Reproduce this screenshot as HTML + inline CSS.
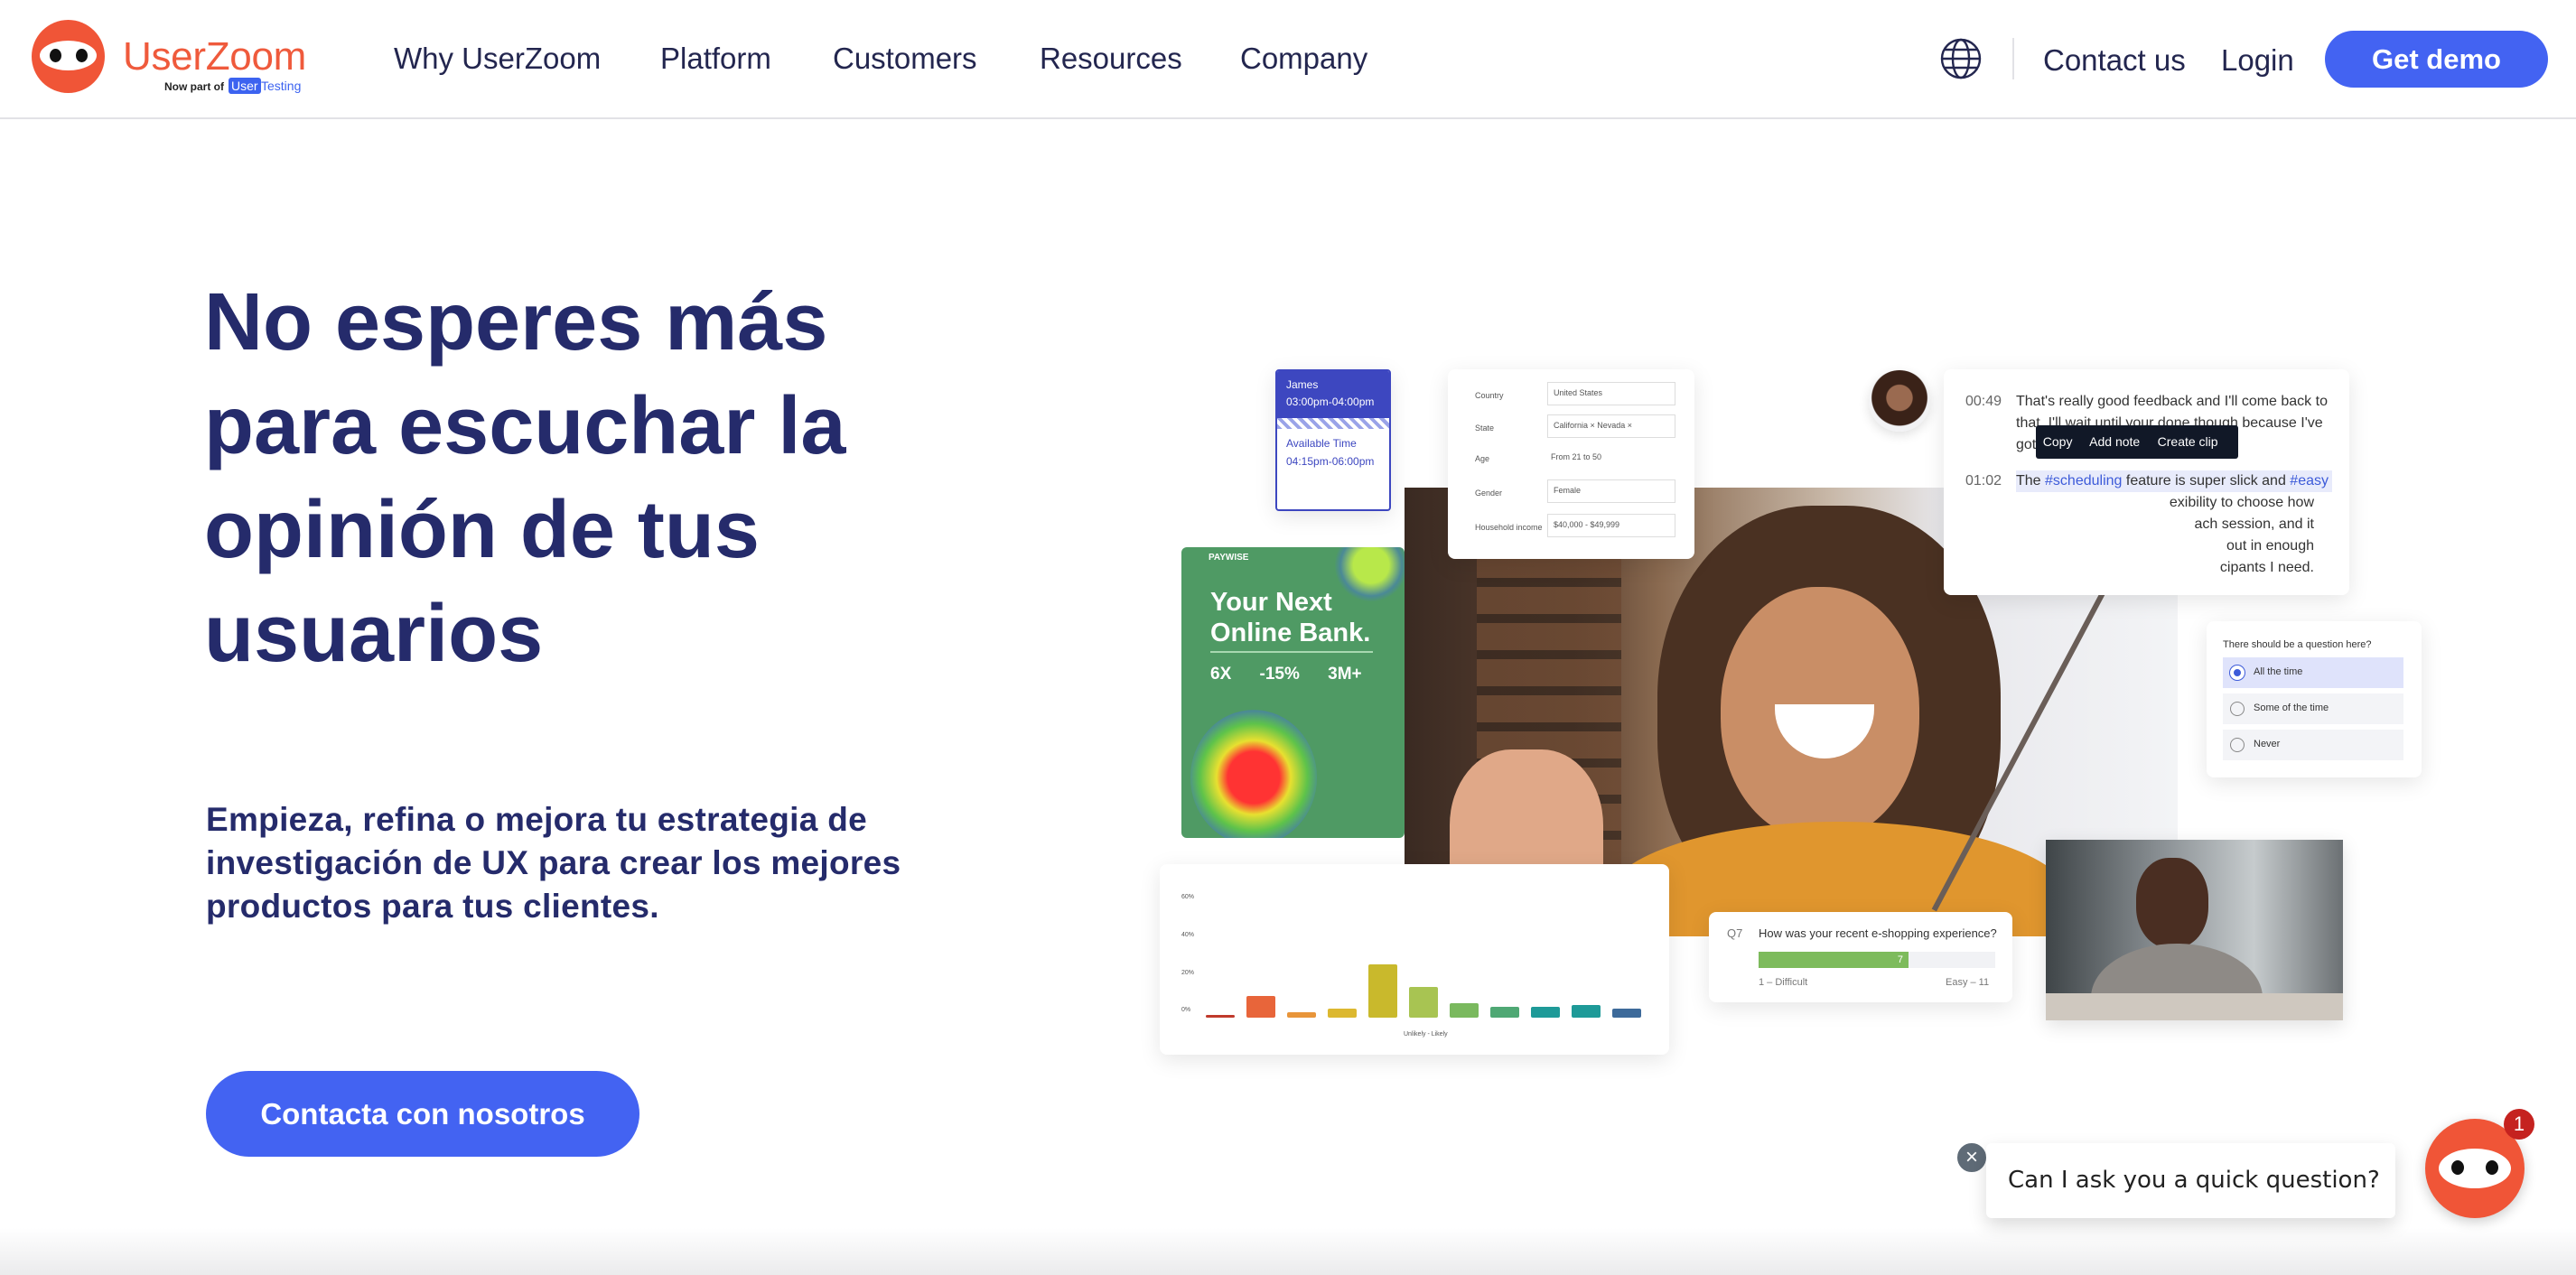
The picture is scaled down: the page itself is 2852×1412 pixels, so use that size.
<!DOCTYPE html>
<html><head><meta charset="utf-8">
<style>
*{margin:0;padding:0;box-sizing:border-box}
body{width:2852px;height:1412px;overflow:hidden;background:#fff;font-family:"Liberation Sans",sans-serif;position:relative;color:#1f2350}
.a{position:absolute}
.nav{font-size:33px;color:#23264f;top:46px}
.card{position:absolute;background:#fff;border-radius:8px;box-shadow:0 6px 24px rgba(0,0,0,.10)}
.sm{font-size:11px;color:#555}
.bar{position:absolute;bottom:0;width:32px;border-radius:2px}
</style></head><body>
<!-- header -->
<div class="a" style="left:0;top:130px;width:2852px;height:2px;background:#e2e2e6"></div>
<div class="a" style="left:35px;top:22px;width:81px;height:81px;border-radius:50%;background:#f05537"></div>
<div class="a" style="left:44px;top:45px;width:63px;height:33px;border-radius:50%;background:#fff"></div>
<div class="a" style="left:55px;top:54px;width:13px;height:15px;border-radius:50%;background:#111"></div>
<div class="a" style="left:84px;top:54px;width:13px;height:15px;border-radius:50%;background:#111"></div>
<div class="a" style="left:136px;top:38px;font-size:44px;color:#ef5a3c;letter-spacing:-0.3px">UserZoom</div>
<div class="a" style="left:182px;top:89px;font-size:12px;color:#222;font-weight:bold">Now part of</div>
<div class="a" style="left:253px;top:86px;font-size:14px;color:#fff;background:#3c63f0;padding:1px 3px;border-radius:3px">User</div>
<div class="a" style="left:289px;top:87px;font-size:14px;color:#3c63f0">Testing</div>
<div class="a nav" style="left:436px">Why UserZoom</div>
<div class="a nav" style="left:731px">Platform</div>
<div class="a nav" style="left:922px">Customers</div>
<div class="a nav" style="left:1151px">Resources</div>
<div class="a nav" style="left:1373px">Company</div>
<svg class="a" style="left:2148px;top:42px" width="46" height="46" viewBox="0 0 46 46" fill="none" stroke="#23264f" stroke-width="2.4"><circle cx="23" cy="23" r="21"/><ellipse cx="23" cy="23" rx="9" ry="21"/><path d="M2 23h42M5 13h36M5 33h36"/></svg>
<div class="a" style="left:2228px;top:42px;width:2px;height:46px;background:#e2e2e6"></div>
<div class="a nav" style="left:2262px;top:48px">Contact us</div>
<div class="a nav" style="left:2459px;top:48px">Login</div>
<div class="a" style="left:2574px;top:34px;width:247px;height:63px;border-radius:32px;background:#4363f2;color:#fff;font-size:31px;font-weight:bold;text-align:center;line-height:63px">Get demo</div>
<!-- hero -->
<div class="a" style="left:226px;top:300px;font-size:90px;font-weight:bold;line-height:115px;color:#252b6b;letter-spacing:0">No esperes más<br>para escuchar la<br>opinión de tus<br>usuarios</div>
<div class="a" style="left:228px;top:884px;font-size:37px;font-weight:bold;line-height:48px;color:#252b6b;letter-spacing:0.3px">Empieza, refina o mejora tu estrategia de<br>investigación de UX para crear los mejores<br>productos para tus clientes.</div>
<div class="a" style="left:228px;top:1186px;width:480px;height:95px;border-radius:48px;background:#4363f2;color:#fff;font-size:33px;font-weight:bold;text-align:center;line-height:95px">Contacta con nosotros</div>
<!-- main photo -->
<div class="a" style="left:1555px;top:540px;width:856px;height:497px;overflow:hidden;background:linear-gradient(90deg,#3a2a22 0%,#5a4030 22%,#8a6a50 33%,#c8b8a8 55%,#e8e8ec 70%,#f3f4f6 100%)">
 <div class="a" style="left:80px;top:60px;width:160px;height:360px;background:repeating-linear-gradient(0deg,#6d4a33 0 30px,#3a2a20 30px 40px);opacity:.8"></div>
 <div class="a" style="left:280px;top:20px;width:380px;height:470px;border-radius:45%;background:#4a3122"></div>
 <div class="a" style="left:350px;top:110px;width:220px;height:280px;border-radius:48%;background:#c98e66"></div>
 <div class="a" style="left:410px;top:240px;width:110px;height:60px;border-radius:0 0 55px 55px;background:#fff"></div>
 <div class="a" style="left:220px;top:370px;width:520px;height:180px;border-radius:50% 50% 0 0;background:#e0962e"></div>
 <div class="a" style="left:50px;top:290px;width:170px;height:210px;border-radius:40%;background:#e0a888"></div>
 <div class="a" style="left:700px;top:0;width:6px;height:497px;background:#6a5e58;transform:rotate(28deg)"></div>
</div>
<!-- calendar -->
<div class="card" style="left:1412px;top:409px;width:128px;height:157px;border:2px solid #3d47c0;border-radius:4px;overflow:hidden">
 <div style="background:#3d47c0;color:#fff;height:52px;padding:6px 10px;font-size:12px;line-height:19px">James<br>03:00pm-04:00pm</div>
 <div style="height:12px;background:repeating-linear-gradient(45deg,#9aa3e8 0 4px,#fff 4px 8px)"></div>
 <div style="padding:6px 10px;font-size:12px;line-height:20px;color:#3d47c0">Available Time<br>04:15pm-06:00pm</div>
</div>
<!-- form -->
<div class="card" style="left:1603px;top:409px;width:273px;height:210px;font-size:9px;color:#555">
 <div class="a" style="left:30px;top:24px">Country</div><div class="a" style="left:110px;top:14px;width:142px;height:26px;border:1px solid #ddd;padding:6px 6px">United States</div>
 <div class="a" style="left:30px;top:60px">State</div><div class="a" style="left:110px;top:50px;width:142px;height:26px;border:1px solid #ddd;padding:6px 6px">California ×  Nevada ×</div>
 <div class="a" style="left:30px;top:94px">Age</div><div class="a" style="left:110px;top:88px;padding:4px">From 21 to 50</div>
 <div class="a" style="left:30px;top:132px">Gender</div><div class="a" style="left:110px;top:122px;width:142px;height:26px;border:1px solid #ddd;padding:6px 6px">Female</div>
 <div class="a" style="left:30px;top:170px">Household income</div><div class="a" style="left:110px;top:160px;width:142px;height:26px;border:1px solid #ddd;padding:6px 6px">$40,000 - $49,999</div>
</div>
<!-- avatar -->
<div class="a" style="left:2069px;top:410px;width:68px;height:68px;border-radius:50%;background:radial-gradient(circle at 50% 45%,#9a6a50 0 28%,#3a2218 30% 60%,#f2f2f4 62%);box-shadow:0 4px 12px rgba(0,0,0,.12)"></div>
<!-- transcript -->
<div class="card" style="left:2152px;top:409px;width:449px;height:250px;font-size:16px;line-height:24px;color:#333">
 <div class="a" style="left:24px;top:24px;color:#666">00:49</div>
 <div class="a" style="left:80px;top:24px;width:350px">That's really good feedback and I'll come back to that. I'll wait until your done though because I've got</div>
 <div class="a" style="left:24px;top:112px;color:#666">01:02</div>
 <div class="a" style="left:80px;top:112px;width:350px;background:#e8ebfb">The <span style="color:#3d5bd9">#scheduling</span> feature is super slick and <span style="color:#3d5bd9">#easy</span></div>
 <div class="a" style="left:180px;top:136px;width:250px;text-align:right;padding-right:20px">exibility to choose how<br>ach session, and it<br>out in enough<br>cipants I need.</div>
 <div class="a" style="left:102px;top:62px;width:224px;height:37px;background:#111827;border-radius:3px;color:#fff;font-size:14px;line-height:37px">&nbsp;&nbsp;Copy &nbsp;&nbsp;&nbsp; Add note &nbsp;&nbsp;&nbsp; Create clip</div>
</div>
<!-- heatmap -->
<div class="a" style="left:1308px;top:606px;width:247px;height:322px;border-radius:6px;background:#4f9a64;overflow:hidden">
 <div class="a" style="left:10px;top:180px;width:140px;height:150px;border-radius:50%;background:radial-gradient(circle,#f33 0 28%,#e8e030 40%,#5ec34a 58%,rgba(70,120,200,.5) 72%,transparent 75%)"></div>
 <div class="a" style="left:170px;top:-20px;width:80px;height:80px;border-radius:50%;background:radial-gradient(circle,#b8e84a 0 35%,rgba(70,120,200,.5) 60%,transparent 72%)"></div>
 <div class="a" style="left:30px;top:6px;color:#fff;font-size:10px;font-weight:bold">PAYWISE</div>
 <div class="a" style="left:32px;top:44px;color:#fff;font-size:29px;font-weight:bold;line-height:34px">Your Next<br>Online Bank.</div>
 <div class="a" style="left:32px;top:115px;width:180px;height:2px;background:#a8d8b0"></div>
 <div class="a" style="left:32px;top:130px;color:#fff;font-size:19px;font-weight:bold;word-spacing:26px">6X -15% 3M+</div>
</div>
<!-- question -->
<div class="card" style="left:2443px;top:688px;width:238px;height:173px;font-size:11px;color:#333">
 <div class="a" style="left:18px;top:20px">There should be a question here?</div>
 <div class="a" style="left:18px;top:40px;width:200px;height:34px;background:#dfe3fb;padding:10px 0 0 34px">All the time</div>
 <div class="a" style="left:18px;top:80px;width:200px;height:34px;background:#f3f4f7;padding:10px 0 0 34px">Some of the time</div>
 <div class="a" style="left:18px;top:120px;width:200px;height:34px;background:#f3f4f7;padding:10px 0 0 34px">Never</div>
 <div class="a" style="left:26px;top:49px;width:16px;height:16px;border-radius:50%;border:4px solid #fff;background:#3d5bd9;box-shadow:0 0 0 1px #3d5bd9"></div>
 <div class="a" style="left:26px;top:89px;width:16px;height:16px;border-radius:50%;border:1px solid #888"></div>
 <div class="a" style="left:26px;top:129px;width:16px;height:16px;border-radius:50%;border:1px solid #888"></div>
</div>
<!-- chart -->
<div class="card" style="left:1284px;top:957px;width:564px;height:211px">
  <div class="a sm" style="left:24px;top:33px;font-size:7px">60%</div>
  <div class="a sm" style="left:24px;top:75px;font-size:7px">40%</div>
  <div class="a sm" style="left:24px;top:117px;font-size:7px">20%</div>
  <div class="a sm" style="left:24px;top:158px;font-size:7px">0%</div>
  <div class="a" style="left:51px;top:170px;width:500px;height:0">
   <div class="bar" style="left:0;height:3px;background:#c0392b"></div>
   <div class="bar" style="left:45px;height:24px;background:#e8653a"></div>
   <div class="bar" style="left:90px;height:6px;background:#e8953a"></div>
   <div class="bar" style="left:135px;height:10px;background:#dcb830"></div>
   <div class="bar" style="left:180px;height:59px;background:#c9b92c"></div>
   <div class="bar" style="left:225px;height:34px;background:#a8c452"></div>
   <div class="bar" style="left:270px;height:16px;background:#7ab95e"></div>
   <div class="bar" style="left:315px;height:12px;background:#4fa874"></div>
   <div class="bar" style="left:360px;height:12px;background:#1e9a98"></div>
   <div class="bar" style="left:405px;height:14px;background:#1e9a98"></div>
   <div class="bar" style="left:450px;height:10px;background:#3d6a9a"></div>
  </div>
  <div class="a sm" style="left:270px;top:185px;font-size:7px">Unlikely - Likely</div>
</div>
<!-- Q7 -->
<div class="card" style="left:1892px;top:1010px;width:336px;height:100px;font-size:13px;color:#333">
 <div class="a" style="left:20px;top:16px;color:#777">Q7</div>
 <div class="a" style="left:55px;top:16px">How was your recent e-shopping experience?</div>
 <div class="a" style="left:55px;top:44px;width:262px;height:18px;background:#f1f2f5"></div>
 <div class="a" style="left:55px;top:44px;width:166px;height:18px;background:#7dbb5c;color:#fff;text-align:right;padding-right:6px;font-size:11px;line-height:18px">7</div>
 <div class="a" style="left:55px;top:72px;font-size:11px;color:#777">1 – Difficult</div>
 <div class="a" style="left:262px;top:72px;font-size:11px;color:#777">Easy – 11</div>
</div>
<!-- man photo -->
<div class="a" style="left:2265px;top:930px;width:329px;height:200px;overflow:hidden;background:linear-gradient(90deg,#3f4548,#8c9296 40%,#c6cbcd 70%,#6b7073);box-shadow:0 6px 20px rgba(0,0,0,.12)">
 <div class="a" style="left:100px;top:20px;width:80px;height:100px;border-radius:45%;background:#4a2e22"></div>
 <div class="a" style="left:50px;top:115px;width:190px;height:120px;border-radius:50% 50% 0 0;background:#8e8a86"></div>
 <div class="a" style="left:0;top:170px;width:329px;height:30px;background:#cfc8bf"></div>
</div>
<!-- chat -->
<div class="a" style="left:0;top:1360px;width:2852px;height:52px;background:linear-gradient(180deg,rgba(255,255,255,0),rgba(230,230,232,.8));"></div>
<div class="a" style="left:2165px;top:1264px;width:36px;height:36px;border-radius:50%;background:#5f6b77;border:2px solid #fff;color:#fff;font-size:24px;text-align:center;line-height:31px">×</div>
<div class="a" style="left:2199px;top:1266px;width:453px;height:83px;background:#fff;border-radius:6px;box-shadow:0 8px 20px rgba(0,0,0,.15);font-family:'DejaVu Sans',sans-serif;font-size:26px;color:#222;line-height:83px;padding-left:24px">Can I ask you a quick question?</div>
<div class="a" style="left:2685px;top:1239px;width:110px;height:110px;border-radius:50%;background:#f05537;box-shadow:0 4px 14px rgba(0,0,0,.2)"></div>
<div class="a" style="left:2700px;top:1272px;width:80px;height:44px;border-radius:50%;background:#fff"></div>
<div class="a" style="left:2714px;top:1285px;width:14px;height:16px;border-radius:50%;background:#111"></div>
<div class="a" style="left:2752px;top:1285px;width:14px;height:16px;border-radius:50%;background:#111"></div>
<div class="a" style="left:2772px;top:1228px;width:34px;height:34px;border-radius:50%;background:#c5221f;color:#fff;font-size:22px;text-align:center;line-height:34px">1</div>
</body></html>
